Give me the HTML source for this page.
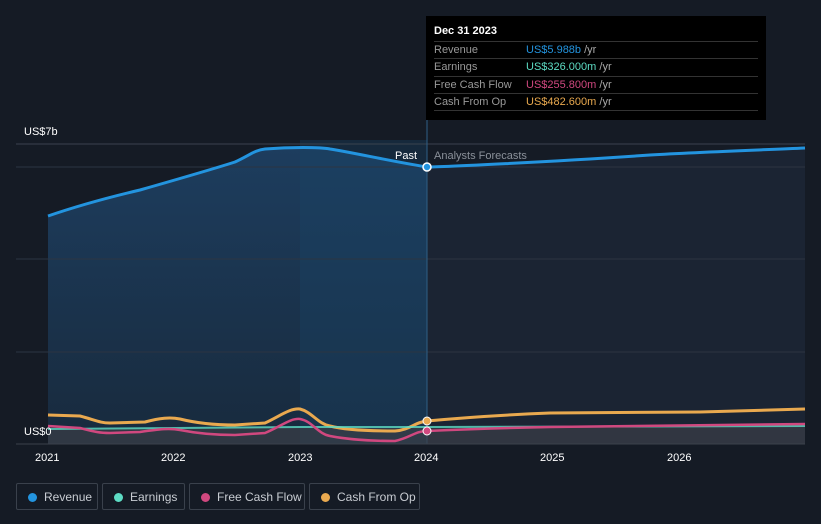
<!DOCTYPE html>
<html><head><meta charset="utf-8"><style>
body{margin:0;width:821px;height:524px;background:#151b25;font-family:"Liberation Sans",sans-serif;overflow:hidden;position:relative}
.tt{position:absolute;left:426px;top:16px;width:340px;height:104px;background:#000;color:#fff;font-size:11px}
.tt .h{position:absolute;left:8px;top:9px;font-weight:bold}
.row{position:absolute;left:8px;width:324px;border-top:1px solid #333;height:17px;line-height:17px;color:#999}
.row span{position:absolute;left:92px}
.row i{font-style:normal;color:#aaa}
.lg{position:absolute;top:483px;height:27px;border:1px solid #3a414c;border-radius:2px;color:#c8ccd2;font-size:12px;line-height:27px;box-sizing:border-box;padding-left:27px}
.lg b{position:absolute;left:11px;top:9px;width:9px;height:9px;border-radius:50%}
.ax{position:absolute;color:#fff;font-size:11px}
</style></head><body>
<svg width="821" height="524" style="position:absolute;left:0;top:0">
<defs><linearGradient id="g" x1="0" y1="0" x2="0" y2="1"><stop offset="0" stop-color="#1d3d5e"/><stop offset="1" stop-color="#182a3d"/></linearGradient></defs>
<path d="M48,216 C80,205 110,197 140,190 C175,180 210,170 235,162 C250,155 255,150 265,149 C290,147 320,147 330,149 C355,153 390,161 427,167 L427,444 L48,444Z" fill="url(#g)"/>
<rect x="300" y="140" width="127" height="304" fill="#1a4466" opacity="0.35"/>
<path d="M427,167 C440,167 550,162 650,155 C700,152 760,150 805,148 L805,444 L427,444Z" fill="#1b2433"/>
<g stroke="#2c3542" stroke-width="1"><line x1="16" y1="144" x2="805" y2="144" stroke="#3a424e"/><line x1="16" y1="167" x2="805" y2="167"/><line x1="16" y1="259" x2="805" y2="259"/><line x1="16" y1="352" x2="805" y2="352"/></g>
<line x1="427" y1="20" x2="427" y2="444" stroke="#2f5f86" stroke-width="1"/>
<path d="M48,429 L300,427 L427,427 L805,426 L805,444 L48,444Z" fill="#3a3f47" opacity="0.7"/>
<path d="M48,216 C80,205 110,197 140,190 C175,180 210,170 235,162 C250,155 255,150 265,149 C290,147 320,147 330,149 C355,153 390,161 427,167 C440,167 550,162 650,155 C700,152 760,150 805,148" fill="none" stroke="#2394df" stroke-width="3"/>
<path d="M48,415 L80,416 C95,420 100,423 110,423 L145,422 C160,418 170,417 180,419 C200,424 220,425 235,425 L265,423 C280,416 290,408 300,409 C312,412 318,424 330,426 C345,430 370,431 395,431 C410,430 415,422 427,421 C470,417 500,415 550,413 L700,412 L805,409" fill="none" stroke="#e9a94f" stroke-width="3"/>
<path d="M48,429 L300,427 L427,427 L805,426" fill="none" stroke="#5ddcc4" stroke-width="2" opacity="0.8"/>
<path d="M48,426 L80,428 C95,432 100,433 110,433 L140,432 C160,429 170,428 180,430 C200,434 220,435 235,435 L265,433 C280,427 290,418 300,419 C312,421 318,434 330,436 C345,439 370,441 395,441 C410,438 415,431 427,431 C470,429 500,428 550,427 L805,424" fill="none" stroke="#d0487f" stroke-width="2.5"/>
<line x1="16" y1="444" x2="805" y2="444" stroke="#3a414c"/>
<circle cx="427" cy="167" r="4" fill="#2394df" stroke="#fff" stroke-width="1.5"/>
<circle cx="427" cy="421" r="4" fill="#e9a94f" stroke="#fff" stroke-width="1"/>
<circle cx="427" cy="431" r="4" fill="#d0487f" stroke="#fff" stroke-width="1"/>
</svg>
<div class="ax" style="left:24px;top:126px">US$7b</div>
<div class="ax" style="left:24px;top:426px">US$0</div>
<div class="ax" style="left:395px;top:150px;">Past</div>
<div class="ax" style="left:434px;top:150px;color:#8a9099">Analysts Forecasts</div>
<div class="ax" style="left:35px;top:452px">2021</div>
<div class="ax" style="left:161px;top:452px">2022</div>
<div class="ax" style="left:288px;top:452px">2023</div>
<div class="ax" style="left:414px;top:452px">2024</div>
<div class="ax" style="left:540px;top:452px">2025</div>
<div class="ax" style="left:667px;top:452px">2026</div>
<div class="tt"><div class="h">Dec 31 2023</div>
<div class="row" style="top:25px">Revenue<span><em style="font-style:normal;color:#2394df">US$5.988b</em> <i>/yr</i></span></div>
<div class="row" style="top:42px">Earnings<span><em style="font-style:normal;color:#5ddcc4">US$326.000m</em> <i>/yr</i></span></div>
<div class="row" style="top:60px">Free Cash Flow<span><em style="font-style:normal;color:#d0487f">US$255.800m</em> <i>/yr</i></span></div>
<div class="row" style="top:77px">Cash From Op<span><em style="font-style:normal;color:#e9a94f">US$482.600m</em> <i>/yr</i></span></div>
<div class="row" style="top:94px;height:0"></div>
</div>
<div class="lg" style="left:16px;width:82px"><b style="background:#2394df"></b>Revenue</div>
<div class="lg" style="left:102px;width:83px"><b style="background:#5ddcc4"></b>Earnings</div>
<div class="lg" style="left:189px;width:116px"><b style="background:#d0487f"></b>Free Cash Flow</div>
<div class="lg" style="left:309px;width:111px"><b style="background:#e9a94f"></b>Cash From Op</div>
</body></html>
